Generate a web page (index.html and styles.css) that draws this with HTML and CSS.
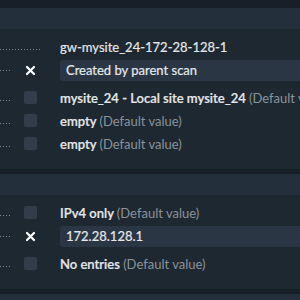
FILE: index.html
```html
<!DOCTYPE html>
<html lang="en">
<head>
    <meta charset="UTF-8">
    <title>Host properties</title>
    <link rel="stylesheet" href="styles.css">
</head>
<body>
    <div class="gap first"></div>
    <div class="section-head"></div>

    <div class="section">
        <div class="row">
            <div class="leader wide"></div>
            <div class="toggle narrow"></div>
            <div class="value plain">gw-mysite_24-172-28-128-1</div>
        </div>
        <div class="row input-row">
            <div class="leader"></div>
            <div class="toggle">
                <svg class="unset" width="13" height="13" viewBox="0 0 13 13">
                    <path d="M3 3 L10 10 M10 3 L3 10" stroke="#ffffff" stroke-width="2.2" stroke-linecap="round"/>
                </svg>
            </div>
            <div class="value"><div class="field">Created by parent scan</div></div>
        </div>
        <div class="row">
            <div class="leader"></div>
            <div class="toggle"><span class="checkbox"></span></div>
            <div class="value">mysite_24 - Local site mysite_24 <span class="default">(Default value)</span></div>
        </div>
        <div class="row">
            <div class="leader"></div>
            <div class="toggle"><span class="checkbox"></span></div>
            <div class="value">empty <span class="default">(Default value)</span></div>
        </div>
        <div class="row">
            <div class="leader"></div>
            <div class="toggle"><span class="checkbox"></span></div>
            <div class="value">empty <span class="default">(Default value)</span></div>
        </div>
    </div>

    <div class="gap"></div>
    <div class="section-head"></div>

    <div class="section">
        <div class="row">
            <div class="leader"></div>
            <div class="toggle"><span class="checkbox"></span></div>
            <div class="value">IPv4 only <span class="default">(Default value)</span></div>
        </div>
        <div class="row input-row">
            <div class="leader"></div>
            <div class="toggle">
                <svg class="unset" width="13" height="13" viewBox="0 0 13 13">
                    <path d="M3 3 L10 10 M10 3 L3 10" stroke="#ffffff" stroke-width="2.2" stroke-linecap="round"/>
                </svg>
            </div>
            <div class="value"><div class="field">172.28.128.1</div></div>
        </div>
        <div class="row">
            <div class="leader"></div>
            <div class="toggle"><span class="checkbox"></span></div>
            <div class="value">No entries <span class="default">(Default value)</span></div>
        </div>
    </div>

    <div class="gap"></div>
    <div class="section-head"></div>
</body>
</html>
```

FILE: styles.css
```css
body {
    font-family: Lato, "Open Sans", sans-serif;
    font-size: 13px;
    color: #e4e7ea;
    background-color: #1d2831;
    margin: 0;
    padding: 0;
    overflow: hidden;
}

.gap {
    height: 5px;
    background-color: #172028;
}

.gap.first {
    height: 8px;
}

.section-head {
    height: 21px;
    background-color: #232f3a;
}

.section {
    padding: 6px 0 14px;
}

.row {
    display: flex;
    align-items: center;
    height: 23px;
    white-space: nowrap;
}

.input-row {
    height: 28px;
    align-items: flex-start;
    padding-top: 2px;
    box-sizing: border-box;
}

.leader {
    flex-shrink: 0;
    width: 12px;
    height: 7px;
    align-self: center;
    background-image: linear-gradient(to right, #7f888f 1px, transparent 1px);
    background-size: 3px 1px;
    background-repeat: repeat-x;
    background-position: left bottom;
}

.input-row .leader {
    margin-top: 4px;
    align-self: flex-start;
}

.leader.wide {
    width: 41px;
}

.toggle {
    flex-shrink: 0;
    width: 48px;
    display: flex;
    align-items: center;
    padding-left: 12px;
    box-sizing: border-box;
}

.toggle.narrow {
    width: 19px;
}

.input-row .toggle {
    height: 21px;
}

.checkbox {
    display: block;
    width: 13px;
    height: 13px;
    border-radius: 2px;
    background-color: #323d4b;
}

.unset {
    display: block;
}

.value {
    flex: 1;
    overflow: hidden;
    font-weight: 600;
    -webkit-text-stroke: 0.2px currentColor;
}

.value.plain {
    font-weight: normal;
}

.default {
    color: #8a939b;
    font-weight: normal;
    -webkit-text-stroke: 0;
}

.field {
    height: 21px;
    line-height: 21px;
    padding-left: 6px;
    border-radius: 3px 0 0 3px;
    background-color: #2a3644;
    color: #e6e9ec;
    font-weight: normal;
}
```
